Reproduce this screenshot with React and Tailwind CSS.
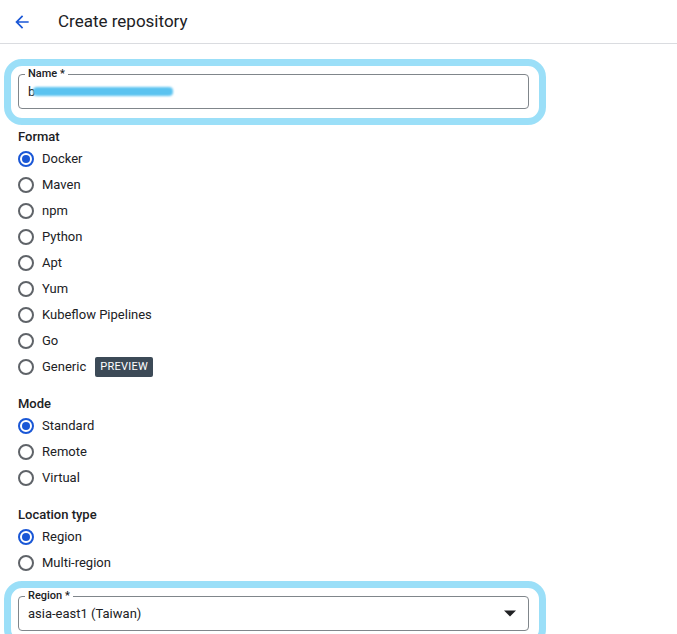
import React from 'react';

const font = { fontFamily: 'Roboto, "Liberation Sans", sans-serif' };

const Radio = ({ label, checked, badge }) => (
    <div className="flex items-center h-[26px]">
        <span className={`w-[16px] h-[16px] rounded-full border-2 flex items-center justify-center ml-[18px] ${checked ? 'border-[#1a57d6]' : 'border-[#5f6368]'}`}>
            {checked && <span className="w-[8px] h-[8px] rounded-full bg-[#1a57d6]" />}
        </span>
        <span className="ml-[8px] text-[13px] text-[#202124]">{label}</span>
        {badge && <span className="ml-[9px] bg-[#3c4a57] text-white text-[11px] px-[5px] h-[20px] flex items-center rounded-[2px] tracking-wide">{badge}</span>}
    </div>
);

const Field = ({ label, children, highlight }) => (
    <div className="relative mx-[18px] w-[511px]">
        <div className="absolute -left-[14px] -top-[15px] -right-[17px] -bottom-[16px] border-[7px] border-[#90dbf7] rounded-[18px] opacity-90" />
        <div className="relative h-[35px] border border-[#80868b] rounded-[4px] flex items-center px-[9px] text-[13px] text-[#202124]">
            <span className="absolute -top-[8px] left-[6px] bg-white px-[3px] text-[11px] font-medium leading-[14px]">{label}</span>
            {children}
        </div>
    </div>
);

export default function App() {
    return (
        <div className="w-[677px] h-[634px] bg-white overflow-hidden" style={font}>
            <div className="h-[44px] border-b border-[#dadce0] flex items-center">
                <svg className="ml-[12px]" width="20" height="20" viewBox="0 0 24 24"><path d="M20 11H7.83l5.59-5.59L12 4l-8 8 8 8 1.41-1.41L7.83 13H20v-2z" fill="#1a57d6" /></svg>
                <span className="ml-[26px] text-[17px] text-[#202124]">Create repository</span>
            </div>
            <div className="pt-[30px]">
                <Field label="Name *">
                    <span>b</span>
                    <span className="ml-[-2px] w-[140px] h-[9px] bg-[#5bc3f0] blur-[1px] rounded" />
                </Field>
            </div>
            <div className="mt-[18px] ml-[18px] text-[13px] font-medium text-[#202124] h-[17px]">Format</div>
            <div className="mt-[2px]">
                <Radio label="Docker" checked />
                <Radio label="Maven" />
                <Radio label="npm" />
                <Radio label="Python" />
                <Radio label="Apt" />
                <Radio label="Yum" />
                <Radio label="Kubeflow Pipelines" />
                <Radio label="Go" />
                <Radio label="Generic" badge="PREVIEW" />
            </div>
            <div className="mt-[14px] ml-[18px] text-[13px] font-medium text-[#202124] h-[17px]">Mode</div>
            <div className="mt-[2px]">
                <Radio label="Standard" checked />
                <Radio label="Remote" />
                <Radio label="Virtual" />
            </div>
            <div className="mt-[14px] ml-[18px] text-[13px] font-medium text-[#202124] h-[17px]">Location type</div>
            <div className="mt-[2px]">
                <Radio label="Region" checked />
                <Radio label="Multi-region" />
            </div>
            <div className="mt-[20px]">
                <Field label="Region *">
                    <span className="flex-1">asia-east1 (Taiwan)</span>
                    <svg width="12" height="7" viewBox="0 0 10 5" className="mr-[3px]"><path d="M0 0l5 5 5-5z" fill="#202124" /></svg>
                </Field>
            </div>
        </div>
    );
}
